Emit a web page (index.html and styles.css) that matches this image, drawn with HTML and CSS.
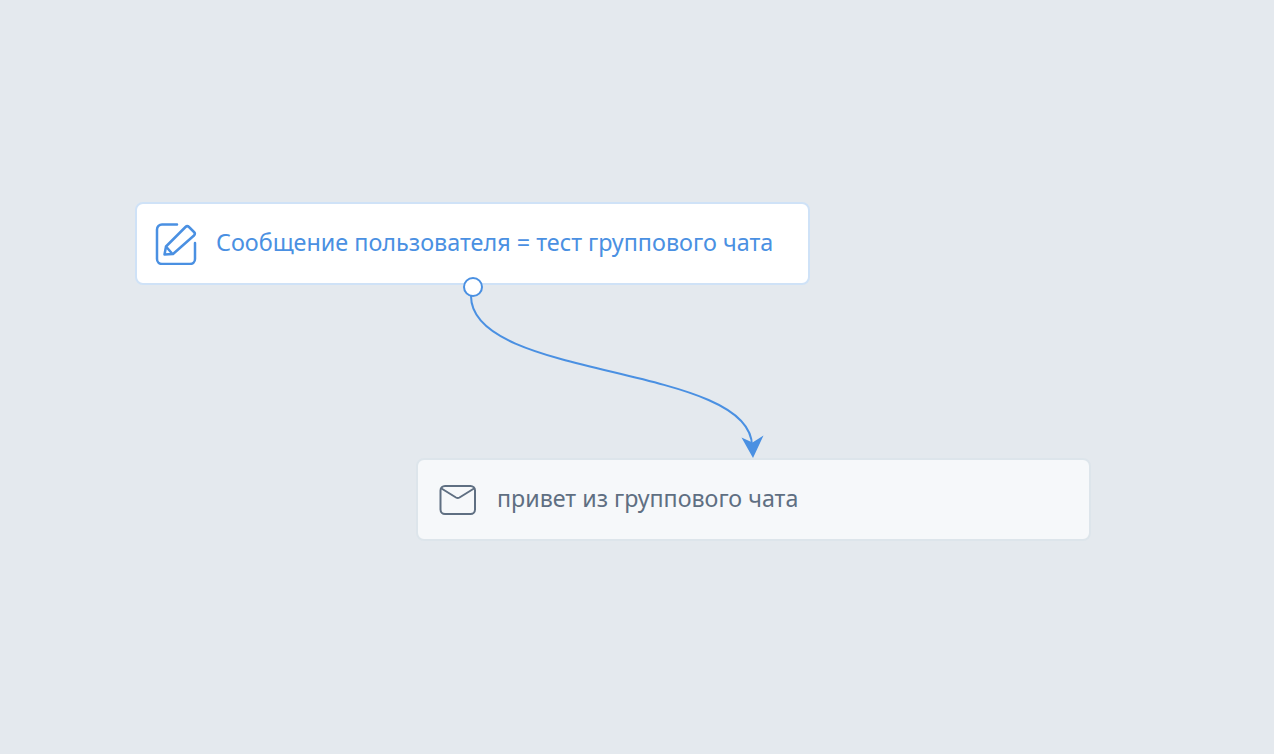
FILE: index.html
```html
<!DOCTYPE html>
<html lang="ru">
<head>
<meta charset="utf-8">
<title>Сценарий</title>
<link rel="stylesheet" href="styles.css">
</head>
<body>
<main class="canvas">
  <svg class="edges" width="1274" height="754" viewBox="0 0 1274 754" aria-hidden="true">
    <path class="edge" d="M471 296C471 380 752 364 752 446"/>
    <path class="arrow" d="M741.500 437.500L752.500 442.500L763.500 435.500L753 458Z"/>
  </svg>
  <div class="node node-condition">
    <svg class="icon" width="42" height="42" viewBox="0 0 42 42" aria-hidden="true">
      <path d="M22 1.500H7A5 5 0 0 0 2 6.500V36A5 5 0 0 0 7 41H35A5 5 0 0 0 40 36V20"/>
      <path d="M9.500 31.500L11 23.500L30.500 4A2.500 2.500 0 0 1 34 4L39 9A2.500 2.500 0 0 1 39 12.500L18 31L9.500 31.500ZM11 23.500L17.500 31"/>
    </svg>
    <span class="label">Сообщение пользователя = тест группового чата</span>
    <span class="port"></span>
  </div>
  <div class="node node-message">
    <svg class="icon" width="38" height="32" viewBox="0 0 38 32" aria-hidden="true">
      <rect x="1.500" y="2" width="34.500" height="28" rx="4.500"/>
      <path d="M2.500 4.500L17 13.500a3.500 3.500 0 0 0 3.500 0L35 4.500"/>
    </svg>
    <span class="label">привет из группового чата</span>
  </div>
</main>
</body>
</html>
```
FILE: styles.css
```css
* {
  box-sizing: border-box;
}

html,
body {
  margin: 0;
  height: 100%;
  overflow: hidden;
}

.canvas {
  position: relative;
  width: 1274px;
  height: 754px;
  background: #e4e9ee;
  font-family: "Noto Sans", "Open Sans", sans-serif;
  font-weight: 450;
}

.edges {
  position: absolute;
  left: 0;
  top: 0;
}

.edge {
  fill: none;
  stroke: #4a90e2;
  stroke-width: 2;
}

.arrow {
  fill: #4a90e2;
}

.node {
  position: absolute;
  display: flex;
  align-items: center;
  height: 83px;
  padding-bottom: 3px;
  border-radius: 8px;
  border: 2px solid;
}

.node-condition {
  left: 135px;
  top: 202px;
  width: 675px;
  padding-left: 18px;
  gap: 19px;
  background: #fff;
  border-color: #cfe2f7;
  color: #4a90e2;
  font-size: 23.370px;
}

.node-message {
  left: 416px;
  top: 458px;
  width: 675px;
  padding-left: 21px;
  gap: 20px;
  background: #f6f8fa;
  border-color: #dde5eb;
  color: #5f6f82;
  font-size: 23.250px;
}

.icon {
  flex: none;
  margin-top: 3px;
  fill: none;
  stroke: currentColor;
  stroke-width: 2.500;
  stroke-linejoin: round;
  stroke-linecap: round;
}

.node-message .icon {
  stroke-width: 2;
}

.label {
  white-space: nowrap;
}

.port {
  position: absolute;
  left: 326px;
  bottom: -14px;
  width: 20px;
  height: 20px;
  border-radius: 50%;
  background: #fff;
  border: 2px solid #4a90e2;
}
```
